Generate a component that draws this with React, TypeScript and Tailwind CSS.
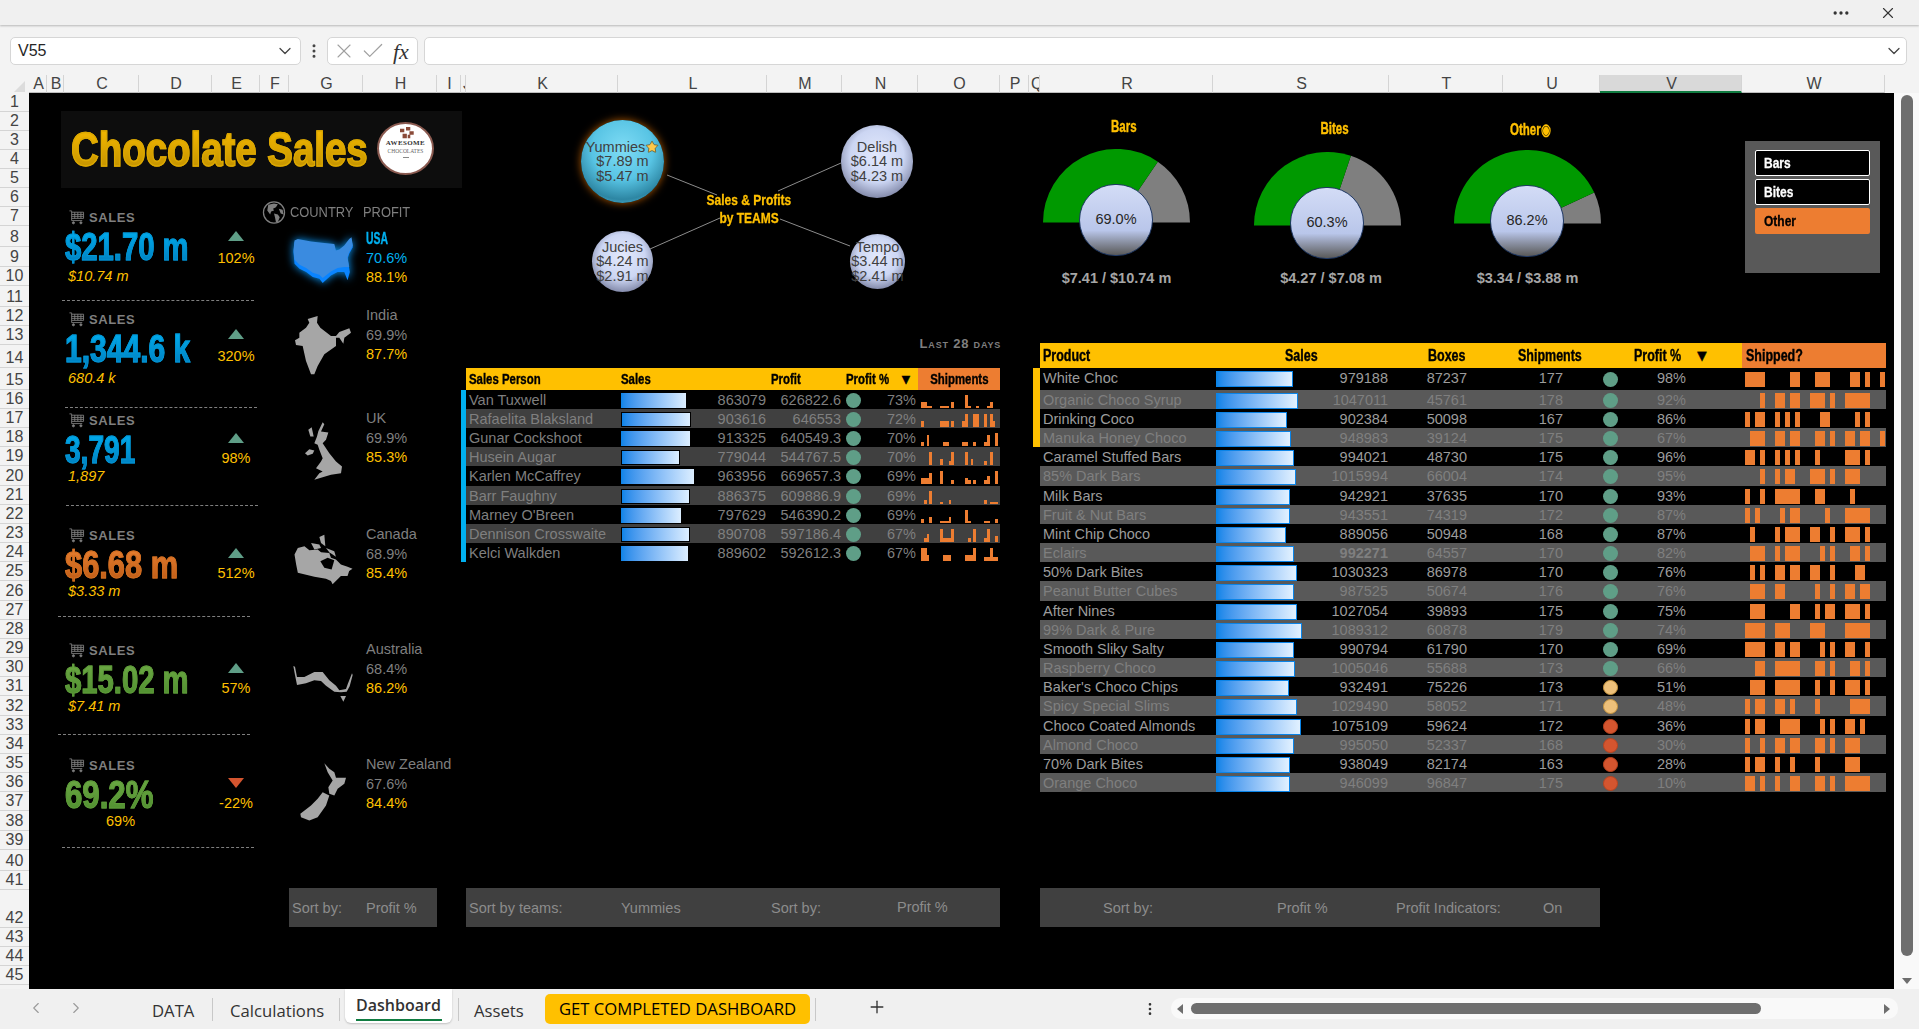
import type { ReactNode } from 'react'
import { clsx } from 'clsx'
import { Check, ChevronDown, ChevronLeft, ChevronRight, Ellipsis, EllipsisVertical, Plus, Star, X } from 'lucide-react'

const columns: [string, number][] = [
  ['A', 18], ['B', 17], ['C', 75], ['D', 73], ['E', 48], ['F', 29], ['G', 74], ['H', 74], ['I', 24], ['J', 5],
  ['K', 152], ['L', 149], ['M', 75], ['N', 76], ['O', 82], ['P', 29], ['Q', 11], ['R', 173], ['S', 176],
  ['T', 114], ['U', 97], ['V', 142], ['W', 143],
]

const rowHeights = [
  19, 19, 19, 19, 19, 19, 19, 21, 20, 19, 21, 19, 19, 23, 22, 19, 19, 19, 19, 20, 19, 19, 19, 19, 19, 20, 19,
  19, 19, 19, 19, 20, 19, 19, 19, 19, 19, 20, 19, 21, 19, 38, 19, 19, 19,
]

const BLUE = 'from-[#00b4f5] to-[#0078b8] [-webkit-text-stroke:1px_#0096d6]'
const ORANGE = 'from-[#ee8434] to-[#b8560f] [-webkit-text-stroke:1px_#d26f22]'
const GREEN = 'from-[#70ad47] to-[#4b8a2c] [-webkit-text-stroke:1px_#5e9b3a]'

const kpis = [
  { big: '$21.70 m', sub: '$10.74 m', pct: '102%', up: true, grad: BLUE, bigCls: 'scale-x-[0.75]', subCls: '-mt-[2px] pl-[39px]', h: 'h-[102px]', body: 'h-[90px]', rule: 'ml-[33px]', trend: 'pt-[21px]', gap: 'mt-[8px]' },
  { big: '1,344.6 k', sub: '680.4 k', pct: '320%', up: true, grad: BLUE, bigCls: 'scale-x-[0.77]', subCls: '-mt-[2px] pl-[39px]', h: 'h-[101px]', body: 'h-[95px]', rule: 'ml-[36px]', trend: 'pt-[17px]', gap: 'mt-[8px]' },
  { big: '3,791', sub: '1,897', pct: '98%', up: true, grad: BLUE, bigCls: 'scale-x-[0.72]', subCls: '-mt-[5px] pl-[39px]', h: 'h-[115px]', body: 'h-[92px]', rule: 'ml-[37px]', trend: 'pt-[20px]', gap: 'mt-[6px]' },
  { big: '$6.68 m', sub: '$3.33 m', pct: '512%', up: true, grad: ORANGE, bigCls: 'scale-x-[0.79]', subCls: '-mt-[5px] pl-[39px]', h: 'h-[115px]', body: 'h-[88px]', rule: 'ml-[29px]', trend: 'pt-[20px]', gap: 'mt-[6px]' },
  { big: '$15.02 m', sub: '$7.41 m', pct: '57%', up: true, grad: GREEN, bigCls: 'scale-x-[0.75]', subCls: '-mt-[5px] pl-[39px]', h: 'h-[115px]', body: 'h-[91px]', rule: 'ml-[29px]', trend: 'pt-[20px]', gap: 'mt-[6px]' },
  { big: '69.2%', sub: '69%', pct: '-22%', up: false, grad: GREEN, bigCls: 'scale-x-[0.8]', subCls: '-mt-[5px] pl-[77px]', h: 'h-[115px]', body: 'h-[89px]', rule: 'ml-[33px]', trend: 'pt-[20px]', gap: 'mt-[6px]' },
]

const countries = [
  { name: 'USA', a: '70.6%', b: '88.1%', h: 'h-[79px]', pad: 'pt-[2px]', map: 'usa', mapTop: '' },
  { name: 'India', a: '69.9%', b: '87.7%', h: 'h-[103px]', pad: '', map: 'india', mapTop: 'mt-[8px]' },
  { name: 'UK', a: '69.9%', b: '85.3%', h: 'h-[116px]', pad: '', map: 'uk', mapTop: 'mt-[12px]' },
  { name: 'Canada', a: '68.9%', b: '85.4%', h: 'h-[115px]', pad: '', map: 'canada', mapTop: 'mt-[8px]' },
  { name: 'Australia', a: '68.4%', b: '86.2%', h: 'h-[115px]', pad: '', map: 'australia', mapTop: 'mt-[25px]' },
  { name: 'New Zealand', a: '67.6%', b: '84.4%', h: 'h-[100px]', pad: '', map: 'nz', mapTop: 'mt-[7px]' },
]

const salesPeople = [
  { name: 'Van Tuxwell', bar: 65, sales: '863079', profit: '626822.6', pct: '73%', spark: '3311000111030000610010001300' },
  { name: 'Rafaelita Blaksland', bar: 70, sales: '903616', profit: '646553', pct: '72%', spark: '3000000333030003600660060630' },
  { name: 'Gunar Cockshoot', bar: 69, sales: '913325', profit: '640549.3', pct: '70%', spark: '2050000022000002200200025006' },
  { name: 'Husein Augar', bar: 59, sales: '779044', profit: '544767.5', pct: '70%', spark: '0006000300260000603000020600' },
  { name: 'Karlen McCaffrey', bar: 73, sales: '963956', profit: '669657.3', pct: '69%', spark: '3335000600020000320200024006' },
  { name: 'Barr Faughny', bar: 69, sales: '886375', profit: '609886.9', pct: '69%', spark: '0206000100200000000000020111' },
  { name: "Marney O'Breen", bar: 60, sales: '797629', profit: '546390.2', pct: '69%', spark: '2003000111300000610000011002' },
  { name: 'Dennison Crosswaite', bar: 69, sales: '890708', profit: '597186.4', pct: '67%', spark: '0240000622260000020600026003' },
  { name: 'Kelci Walkden', bar: 67, sales: '889602', profit: '592612.3', pct: '67%', spark: '6630000033300000333600022622' },
]

const GOOD = 'bg-[#5f9e87]'
const MID = 'bg-[#edc07a] border border-[#c8953f]'
const BAD = 'bg-[#d4552f] border border-[#b8431f]'

const products: { name: string; bar: number; sales: string; boxes: string; ship: string; dot: string; pct: string; spans: number[][]; bold?: boolean }[] = [
  { name: 'White Choc', bar: 77, sales: '979188', boxes: '87237', ship: '177', dot: GOOD, pct: '98%', spans: [[0, 4], [9, 2], [14, 3], [21, 2], [24, 1], [27, 1]] },
  { name: 'Organic Choco Syrup', bar: 82, sales: '1047011', boxes: '45761', ship: '178', dot: GOOD, pct: '92%', spans: [[3, 1], [6, 2], [9, 2], [13, 3], [17, 1], [20, 5]] },
  { name: 'Drinking Coco', bar: 71, sales: '902384', boxes: '50098', ship: '167', dot: GOOD, pct: '86%', spans: [[0, 1], [2, 2], [6, 1], [8, 1], [10, 1], [15, 2], [22, 1], [24, 1]] },
  { name: 'Manuka Honey Choco', bar: 75, sales: '948983', boxes: '39124', ship: '175', dot: GOOD, pct: '67%', spans: [[1, 3], [6, 2], [9, 2], [14, 2], [17, 1], [20, 2], [23, 2], [27, 1]] },
  { name: 'Caramel Stuffed Bars', bar: 78, sales: '994021', boxes: '48730', ship: '175', dot: GOOD, pct: '96%', spans: [[0, 2], [3, 1], [6, 1], [8, 1], [10, 1], [14, 1], [20, 3], [24, 1]] },
  { name: '85% Dark Bars', bar: 80, sales: '1015994', boxes: '66004', ship: '174', dot: GOOD, pct: '95%', spans: [[3, 1], [6, 1], [8, 2], [13, 3], [17, 1], [20, 3]] },
  { name: 'Milk Bars', bar: 74, sales: '942921', boxes: '37635', ship: '170', dot: GOOD, pct: '93%', spans: [[0, 1], [3, 1], [6, 5], [14, 2], [21, 1]] },
  { name: 'Fruit & Nut Bars', bar: 74, sales: '943551', boxes: '74319', ship: '172', dot: GOOD, pct: '87%', spans: [[0, 1], [2, 1], [7, 1], [9, 2], [16, 1], [20, 5]] },
  { name: 'Mint Chip Choco', bar: 70, sales: '889056', boxes: '50948', ship: '168', dot: GOOD, pct: '87%', spans: [[1, 1], [6, 1], [8, 3], [13, 2], [17, 1], [20, 3], [24, 1]] },
  { name: 'Eclairs', bar: 78, sales: '992271', boxes: '64557', ship: '170', dot: GOOD, pct: '82%', bold: true, spans: [[1, 3], [6, 1], [8, 3], [15, 1], [17, 1], [21, 2], [24, 1]] },
  { name: '50% Dark Bites', bar: 81, sales: '1030323', boxes: '86978', ship: '170', dot: GOOD, pct: '76%', spans: [[1, 1], [3, 1], [6, 2], [9, 2], [13, 2], [17, 1], [22, 2]] },
  { name: 'Peanut Butter Cubes', bar: 78, sales: '987525', boxes: '50674', ship: '176', dot: GOOD, pct: '76%', spans: [[1, 3], [6, 2], [14, 1], [17, 1], [20, 2], [23, 2]] },
  { name: 'After Nines', bar: 81, sales: '1027054', boxes: '39893', ship: '175', dot: GOOD, pct: '75%', spans: [[1, 3], [9, 2], [14, 1], [16, 2], [20, 3], [24, 1]] },
  { name: '99% Dark & Pure', bar: 86, sales: '1089312', boxes: '60878', ship: '179', dot: GOOD, pct: '74%', spans: [[0, 4], [6, 3], [13, 3], [20, 5]] },
  { name: 'Smooth Sliky Salty', bar: 78, sales: '990794', boxes: '61790', ship: '170', dot: GOOD, pct: '69%', spans: [[0, 4], [6, 2], [9, 2], [15, 1], [17, 1], [20, 2], [24, 1]] },
  { name: 'Raspberry Choco', bar: 79, sales: '1005046', boxes: '55688', ship: '173', dot: GOOD, pct: '66%', spans: [[2, 2], [6, 5], [14, 2], [17, 1], [21, 2], [24, 1]] },
  { name: "Baker's Choco Chips", bar: 73, sales: '932491', boxes: '75226', ship: '173', dot: MID, pct: '51%', spans: [[1, 3], [6, 5], [14, 1], [17, 1], [20, 3], [24, 1]] },
  { name: 'Spicy Special Slims', bar: 81, sales: '1029490', boxes: '58052', ship: '171', dot: MID, pct: '48%', spans: [[0, 1], [2, 2], [6, 2], [9, 1], [14, 1], [21, 4]] },
  { name: 'Choco Coated Almonds', bar: 85, sales: '1075109', boxes: '59624', ship: '172', dot: BAD, pct: '36%', spans: [[0, 1], [2, 2], [7, 4], [15, 1], [17, 1], [20, 2], [23, 1]] },
  { name: 'Almond Choco', bar: 78, sales: '995050', boxes: '52337', ship: '168', dot: BAD, pct: '30%', spans: [[0, 1], [3, 1], [6, 2], [9, 2], [14, 2], [17, 1], [20, 3]] },
  { name: '70% Dark Bites', bar: 74, sales: '938049', boxes: '82174', ship: '163', dot: BAD, pct: '28%', spans: [[0, 1], [2, 2], [6, 1], [9, 1], [14, 1], [20, 3]] },
  { name: 'Orange Choco', bar: 74, sales: '946099', boxes: '96847', ship: '175', dot: BAD, pct: '10%', spans: [[0, 2], [3, 1], [6, 1], [9, 2], [14, 2], [17, 1], [20, 5]] },
]

const gauges = [
  { title: 'Bars', mark: '', value: 0.69, label: '69.0%', money: '$7.41 / $10.74 m', wrap: 'mt-[24px] ml-[3px]', gap: 'mt-[12px]', moneyCls: 'mt-[46px]', titleCls: 'pl-[14px]' },
  { title: 'Bites', mark: '', value: 0.603, label: '60.3%', money: '$4.27 / $7.08 m', wrap: 'mt-[26px] ml-[64px]', gap: 'mt-[13px]', moneyCls: 'mt-[43px] pl-[7px]', titleCls: 'pl-[14px]' },
  { title: 'Other', mark: '◉', value: 0.862, label: '86.2%', money: '$3.34 / $3.88 m', wrap: 'mt-[27px] ml-[53px]', gap: 'mt-[10px]', moneyCls: 'mt-[45px]', titleCls: 'pl-[6px]' },
]

// pulled out of the sheet by eye, points are in the zoomed map's own units
function CountryMap({ map }: { map: string }) {
  if (map === 'usa') {
    return (
      <svg viewBox="0 0 255 175" className="w-[85px] h-[58px] drop-shadow-[0_0_4px_#0a9cff]">
        <polygon fill="#0a84ff" points="40,40 50,35 90,43 130,47 160,50 165,70 175,67 190,55 205,35 212,30 216,55 205,75 200,90 207,130 200,155 190,130 170,130 150,140 125,163 115,150 95,145 75,130 55,120 40,105 37,70" />
        <polygon fill="#3a8be0" points="40,35 50,30 90,38 130,42 160,45 165,65 175,62 190,50 205,30 212,25 216,50 205,70 200,85 205,115 190,115 170,118 150,128 125,148 115,138 95,132 75,118 55,108 40,92 37,65" />
      </svg>
    )
  }
  if (map === 'india') {
    return (
      <svg viewBox="0 0 255 195" className="w-[85px] h-[65px]">
        <polygon fill="#a6a6a6" points="80,15 110,6 108,26 118,41 150,66 165,66 175,54 205,43 210,56 190,71 187,89 175,71 165,71 165,96 130,121 110,156 100,181 90,181 75,141 65,96 45,93 42,79 55,71 55,56 75,41 85,26" />
      </svg>
    )
  }
  if (map === 'uk') {
    return (
      <svg viewBox="0 0 255 185" className="w-[85px] h-[62px]">
        <g fill="#a6a6a6">
          <polygon points="125,3 130,9 120,31 142,34 135,56 125,66 145,96 165,121 183,136 180,156 150,161 100,176 115,156 125,151 105,141 120,121 125,111 115,86 110,71 100,66 108,46 112,30" />
          <polygon points="72,96 85,84 100,88 95,98 80,103" />
          <polygon points="82,26 92,18 98,46 88,46" />
        </g>
      </svg>
    )
  }
  if (map === 'canada') {
    return (
      <svg viewBox="0 0 255 175" className="w-[85px] h-[58px]">
        <g fill="#a6a6a6">
          <polygon points="50,45 70,40 85,52 110,50 120,58 145,60 150,75 165,80 180,95 200,102 215,108 205,115 200,130 180,130 155,155 150,145 135,138 100,132 50,120 45,95 40,65" />
          <polygon points="90,30 115,35 120,45 100,50" />
          <polygon points="115,12 130,5 133,40 120,30" />
          <polygon points="135,45 160,55 165,72 145,58" />
        </g>
        <polygon fill="#000" points="118,85 140,75 160,82 152,110 130,105" />
      </svg>
    )
  }
  if (map === 'australia') {
    return (
      <svg viewBox="0 0 255 120" className="w-[85px] h-[40px]">
        <g fill="#a6a6a6">
          <polygon points="37,3 42,5 48,36 70,36 100,21 125,21 145,46 165,62 175,76 195,72 200,58 213,25 215,30 206,64 197,80 180,82 160,80 135,62 120,48 100,46 75,55 48,60 42,30" />
          <polygon points="178,93 195,93 187,110" />
        </g>
      </svg>
    )
  }
  return (
    <svg viewBox="0 0 255 185" className="w-[85px] h-[62px]">
      <g fill="#a6a6a6">
        <polygon points="130,3 145,20 160,30 165,47 195,47 190,65 170,80 160,100 145,95 142,75 155,55 140,30" />
        <polygon points="125,90 145,100 135,130 110,165 85,175 60,165 58,155 90,130 110,110" />
      </g>
    </svg>
  )
}

function Cart() {
  return (
    <svg viewBox="0 0 18 17" className="w-[17px] h-[15px] flex-none" fill="none" stroke="#7f7f7f" strokeWidth="1">
      <path d="M1 1h2.5v11h12M3.5 2.5H17v7H3.5M3.5 5h13.5M3.5 7.2h13.5M7 2.5v7M10.5 2.5v7M14 2.5v7" />
      <circle cx="5.5" cy="14.5" r="1.2" fill="#7f7f7f" />
      <circle cx="14" cy="14.5" r="1.2" fill="#7f7f7f" />
    </svg>
  )
}

function Globe() {
  return (
    <svg viewBox="0 0 24 24" className="w-[24px] h-[23px] flex-none">
      <circle cx="12" cy="12" r="11" fill="none" stroke="#7f7f7f" strokeWidth="1.3" />
      <path fill="#7f7f7f" d="M6 4l6-1.5 4 1-2 3-3 1.5 1 2-3 1-1 3-3-4zM12 13l4 1 2 3-2 5-2 0-1-5zM17 8l4 1 1 5-3-1z" />
    </svg>
  )
}

function Kpi({ kpi }: { kpi: (typeof kpis)[number] }) {
  return (
    <div className={kpi.h}>
      <div className={clsx('flex', kpi.body)}>
        <div className="w-[181px] flex-none">
          <div className="flex items-center gap-[4px] pl-[39px] h-[15px]">
            <Cart />
            <span className="text-[13px] font-bold tracking-[0.6px] text-[#7f7f7f]">SALES</span>
          </div>
          <div className="pl-[36px] h-[44px] flex items-center">
            <span
              className={clsx(
                'inline-block origin-left whitespace-nowrap text-[39px] leading-[1.15] font-bold bg-linear-to-b bg-clip-text text-transparent',
                kpi.grad,
                kpi.bigCls,
              )}
            >
              {kpi.big}
            </span>
          </div>
          <div className={clsx('h-[20px] flex items-center text-[14.5px] text-[#ffc000]', kpi.subCls, kpi.big !== '69.2%' && 'italic')}>{kpi.sub}</div>
        </div>
        <div className={clsx('w-[52px] flex-none flex flex-col items-center', kpi.trend)}>
          {kpi.up ? (
            <div className="w-0 h-0 border-l-[8px] border-r-[8px] border-b-[10px] border-l-transparent border-r-transparent border-b-[#5f9e87]" />
          ) : (
            <div className="w-0 h-0 border-l-[8px] border-r-[8px] border-t-[10px] border-l-transparent border-r-transparent border-t-[#d4552f]" />
          )}
          <span className={clsx('text-[14.5px] leading-[18px] text-[#ffc000]', kpi.gap)}>{kpi.pct}</span>
        </div>
      </div>
      <div className={clsx('w-[192px] border-t border-dashed border-[#7f7f7f]', kpi.rule)} />
    </div>
  )
}

function CountryRow({ c }: { c: (typeof countries)[number] }) {
  const isUsa = c.name === 'USA'
  return (
    <div className={clsx('flex flex-none', c.h, c.pad)}>
      <div className="w-[104px] flex-none flex justify-end">
        <div className={clsx('w-[85px]', c.mapTop)}>
          <CountryMap map={c.map} />
        </div>
      </div>
      <div className="text-[14.5px] leading-[19.5px] whitespace-nowrap">
        {isUsa ? (
          <div className="text-[#00b0f0] font-bold text-[16px] origin-left scale-x-[0.65] [-webkit-text-stroke:0.4px_#00b0f0]">{c.name}</div>
        ) : (
          <div className="text-[#7f7f7f]">{c.name}</div>
        )}
        <div className={isUsa ? 'text-[#00b0f0]' : 'text-[#7f7f7f]'}>{c.a}</div>
        <div className="text-[#ffc000]">{c.b}</div>
      </div>
    </div>
  )
}

function LeftColumn() {
  return (
    <div className="w-[432px] flex-none flex flex-col">
      <div className="mt-[18px] ml-[32px] w-[401px] h-[77px] flex-none bg-[#0d0d0d] flex items-center relative">
        <span className="ml-[10px] inline-block origin-left scale-x-[0.8] whitespace-nowrap text-[48px] leading-[1.2] font-bold bg-linear-to-b from-[#ffc000] to-[#b88a00] bg-clip-text text-transparent [-webkit-text-stroke:1.5px_#dca800]">
          Chocolate Sales
        </span>
        <div className="absolute left-[316px] top-[11px] w-[57px] h-[53px] rounded-[50%] bg-white border-2 border-[#8a5a50] flex flex-col items-center [font-family:'Liberation_Serif',serif]">
          <svg viewBox="0 0 20 14" className="w-[18px] h-[12px] mt-[3px]">
            <path fill="#8a4a38" d="M3 2h5v4H3zM10 0h5v4h-5zM14 5h5v4h-5zM6 8h5v5H6zM12 9h3v4h-3z" />
          </svg>
          <span className="text-[7px] leading-[9px] font-bold text-[#333] tracking-[0.4px]">AWESOME</span>
          <span className="text-[5.5px] leading-[6px] text-[#666]">CHOCOLATES</span>
          <span className="mt-[3px] w-[6px] border-t border-[#888]" />
        </div>
      </div>
      <div className="flex flex-1">
        <div className="w-[233px] flex-none pt-[22px]">
          {kpis.map((k) => (
            <Kpi key={k.big} kpi={k} />
          ))}
        </div>
        <div className="w-[199px] flex-none flex flex-col pt-[13px]">
          <div className="flex items-center h-[23px] text-[14px] text-[#7f7f7f] mb-[3px]">
            <Globe />
            <span className="ml-[4px] w-[73px] inline-block origin-left scale-x-[0.92] whitespace-nowrap font-medium">COUNTRY</span>
            <span className="origin-left scale-x-[0.92] inline-block font-medium">PROFIT</span>
          </div>
          {countries.map((c) => (
            <CountryRow key={c.name} c={c} />
          ))}
          <div className="mt-auto mb-[62px] w-[148px] h-[39px] bg-[#404040] flex items-center pt-[2px] text-[14.5px] text-[#8c8c8c] ml-[27px]">
            <span className="ml-[3px] w-[74px]">Sort by:</span>
            <span>Profit %</span>
          </div>
        </div>
      </div>
    </div>
  )
}

function Ball({ cls, name, a, b, star }: { cls: string; name: string; a: string; b: string; star?: boolean }) {
  return (
    <div className={clsx('absolute rounded-full flex flex-col items-center justify-center text-[14.5px] leading-[14.5px] text-[#404040] whitespace-nowrap', cls)}>
      <div className="flex items-center">
        {name}
        {star && <Star className="w-[14px] h-[14px] fill-[#ffc84a] text-[#5a4a20]" strokeWidth={1.2} />}
      </div>
      <div>{a}</div>
      <div>{b}</div>
    </div>
  )
}

function Network() {
  const silver = 'bg-[radial-gradient(circle_at_50%_42%,#e3e9fc_0%,#ccd6f3_48%,#7f86a6_78%,#ced8f5_96%)]'
  return (
    <div className="relative h-[275px] flex-none flex flex-col justify-end items-end">
      <svg className="absolute inset-0 w-full h-full" fill="none" stroke="#8c8c8c" strokeWidth="1">
        <line x1="206" y1="82" x2="256" y2="102" />
        <line x1="317" y1="98" x2="380" y2="70" />
        <line x1="189" y1="156" x2="259" y2="125" />
        <line x1="319" y1="126" x2="389" y2="153" />
      </svg>
      <Ball cls="left-[120px] top-[27px] w-[83px] h-[83px] shadow-[0_0_8px_#b35a00] bg-[radial-gradient(circle_at_50%_35%,#7fdcf5_0%,#58c4e4_45%,#2d86a3_74%,#62cbea_94%)]" name="Yummies" a="$7.89 m" b="$5.47 m" star />
      <Ball cls={clsx('left-[380px] top-[32px] w-[72px] h-[73px]', silver)} name="Delish" a="$6.14 m" b="$4.23 m" />
      <Ball cls={clsx('left-[131px] top-[138px] w-[61px] h-[61px]', silver)} name="Jucies" a="$4.24 m" b="$2.91 m" />
      <Ball cls={clsx('left-[389px] top-[141px] w-[55px] h-[55px]', silver)} name="Tempo" a="$3.44 m" b="$2.41 m" />
      <div className="absolute left-[228px] top-[98px] w-[120px] flex flex-col items-center text-[15px] leading-[18px] font-bold text-[#ffc000] whitespace-nowrap [-webkit-text-stroke:0.3px_#ffc000]">
        <span className="scale-x-[0.8] inline-block">Sales &amp; Profits</span>
        <span className="scale-x-[0.8] inline-block">by TEAMS</span>
      </div>
      <span className="mb-[17px] mr-[39px] text-[13px] leading-[14px] font-bold text-[#7f7f7f] tracking-[0.8px] [font-variant:small-caps]">Last 28 days</span>
    </div>
  )
}

function Spark({ data }: { data: string }) {
  return (
    <div className="h-[15px] pl-[5px] pr-[2px] grid grid-cols-[repeat(28,1fr)] items-end">
      {data.split('').map((d, i) => (
        <div key={i} className="bg-[#ed7d31]" style={{ height: Number(d) * 2.2 }} />
      ))}
    </div>
  )
}

function SalesTable() {
  return (
    <div className="flex">
      <div className="w-[5px] flex-none mt-[22px] h-[172px] bg-[#00b0f0]" />
      <div className="w-[534px] flex-none">
        <div className="flex h-[22px] bg-[#ffc000] text-black text-[15px] font-bold items-center whitespace-nowrap [-webkit-text-stroke:0.4px_black]">
          <div className="w-[155px] pl-[3px]"><span className="inline-block origin-left scale-x-[0.76]">Sales Person</span></div>
          <div className="w-[150px]"><span className="inline-block origin-left scale-x-[0.76]">Sales</span></div>
          <div className="w-[75px]"><span className="inline-block origin-left scale-x-[0.76]">Profit</span></div>
          <div className="w-[72px] flex items-center"><span className="inline-block w-[53px] origin-left scale-x-[0.76]">Profit %</span><span className="text-[14px]">▼</span></div>
          <div className="w-[82px] h-full bg-[#ed7d31] flex items-center justify-center"><span className="inline-block scale-x-[0.76]">Shipments</span></div>
        </div>
        {salesPeople.map((p, i) => (
          <div
            key={p.name}
            className={clsx(
              'grid grid-cols-[155px_145px_75px_24px_51px_84px] items-center text-[14.5px] text-[#7f7f7f] whitespace-nowrap',
              i === 4 ? 'h-[20px]' : 'h-[19px]',
              i % 2 === 1 ? 'bg-[#404040]' : 'bg-black',
            )}
          >
            <div className="pl-[3px]">{p.name}</div>
            <div className="flex items-center justify-between">
              <div
                className={clsx('h-[15px] bg-linear-to-r from-[#0a84e8] to-[#dceeff]', i % 2 === 1 && 'border border-black')}
                style={{ width: p.bar }}
              />
              <span>{p.sales}</span>
            </div>
            <div className="text-right">{p.profit}</div>
            <div className="flex justify-center"><div className={clsx('w-[15px] h-[15px] rounded-full', GOOD)} /></div>
            <div className="text-right">{p.pct}</div>
            <Spark data={p.spark} />
          </div>
        ))}
      </div>
    </div>
  )
}

function Gauge({ g }: { g: (typeof gauges)[number] }) {
  const r = 73.5
  const a = g.value * Math.PI
  const x = r - r * Math.cos(a)
  const y = r - r * Math.sin(a)
  return (
    <div className={clsx('w-[147px] flex-none flex flex-col', g.wrap)}>
      <div className={clsx('h-[20px] flex items-center justify-center text-[16px] font-bold text-[#ffc000]', g.titleCls)}>
        <span className="inline-block scale-x-[0.72] whitespace-nowrap">
          <span className="[-webkit-text-stroke:0.4px_#ffc000]">{g.title}</span>
          {g.mark}
        </span>
      </div>
      <div className={clsx('relative h-[74px]', g.gap)}>
        <svg viewBox="0 0 147 74" className="w-[147px] h-[74px]">
          <path fill="#7f7f7f" d={`M73.5 73.5L${x} ${y}A${r} ${r} 0 0 1 147 73.5Z`} />
          <path fill="#009900" d={`M0 73.5A${r} ${r} 0 0 1 ${x} ${y}L73.5 73.5Z`} />
        </svg>
        <div className="absolute left-[36px] top-[35px] w-[74px] h-[72px] rounded-full border border-[#1f3864] bg-linear-to-b from-[#d3dcf6] via-[#b9c6ea] via-65% to-[#5a5a5a] flex items-center justify-center text-[14.5px] text-[#262626]">
          {g.label}
        </div>
      </div>
      <div className={clsx('h-[20px] flex items-center justify-center text-[14.5px] font-bold text-[#a6a6a6] whitespace-nowrap', g.moneyCls)}>
        <span className="inline-block">{g.money}</span>
      </div>
    </div>
  )
}

function ProductTable() {
  return (
    <div className="flex -ml-[7px]">
      <div className="w-[7px] flex-none mt-[25px] h-[79px] bg-[#ffc000]" />
      <div className="w-[846px] flex-none">
        <div className="flex h-[25px] bg-[#ffc000] text-black text-[16px] font-bold items-center whitespace-nowrap [-webkit-text-stroke:0.4px_black]">
          <div className="w-[245px] pl-[3px]"><span className="inline-block origin-left scale-x-[0.78]">Product</span></div>
          <div className="w-[143px]"><span className="inline-block origin-left scale-x-[0.78]">Sales</span></div>
          <div className="w-[90px]"><span className="inline-block origin-left scale-x-[0.78]">Boxes</span></div>
          <div className="w-[116px]"><span className="inline-block origin-left scale-x-[0.78]">Shipments</span></div>
          <div className="w-[108px] flex items-center"><span className="inline-block w-[60px] origin-left scale-x-[0.78]">Profit %</span><span className="text-[16px]">▼</span></div>
          <div className="w-[144px] h-full bg-[#ed7d31] pl-[4px] flex items-center"><span className="inline-block origin-left scale-x-[0.78]">Shipped?</span></div>
        </div>
        {products.map((p, i) => (
          <div
            key={p.name}
            className={clsx(
              'grid grid-cols-[173px_175px_79px_96px_94px_29px_56px_144px] items-center text-[14.5px] whitespace-nowrap',
              i === 0 ? 'h-[22px]' : i === 5 || i === 11 || i === 17 ? 'h-[20px]' : 'h-[19px]',
              i % 2 === 1 ? 'bg-[#595959] text-[#7f7f7f]' : 'bg-black text-[#9c9c9c]',
            )}
          >
            <div className="pl-[3px]">{p.name}</div>
            <div className="flex items-center justify-between pl-[3px]">
              <div className="h-[16px] border border-[#0a84e8] bg-linear-to-r from-[#0a84e8] to-[#e2f1ff]" style={{ width: p.bar }} />
              <span className={clsx(p.bold && 'font-bold')}>{p.sales}</span>
            </div>
            <div className="text-right">{p.boxes}</div>
            <div className="text-right">{p.ship}</div>
            <div className="flex justify-center"><div className={clsx('w-[15px] h-[15px] rounded-full', p.dot)} /></div>
            <div className="text-right flex justify-end">{p.pct}</div>
            <div />
            <div className="pl-[3px] pr-[1px] grid grid-cols-[repeat(28,1fr)] h-[15px]">
              {p.spans.map(([start, len]) => (
                <div key={start} className="bg-[#ed7d31]" style={{ gridColumn: `${start + 1} / span ${len}` }} />
              ))}
            </div>
          </div>
        ))}
      </div>
    </div>
  )
}

function Slicer() {
  return (
    <div className="mt-[48px] ml-[144px] w-[135px] h-[132px] flex-none bg-[#595959] pt-[9px] pl-[10px] flex flex-col gap-[3px]">
      {['Bars', 'Bites'].map((s) => (
        <div key={s} className="w-[115px] h-[26px] rounded-[2px] bg-black border border-white text-white text-[15px] font-bold flex items-center pl-[8px] [-webkit-text-stroke:0.3px_white]">
          <span className="inline-block origin-left scale-x-[0.8]">{s}</span>
        </div>
      ))}
      <div className="w-[115px] h-[26px] rounded-[2px] bg-[#ed7d31] text-black text-[15px] font-bold flex items-center pl-[9px] [-webkit-text-stroke:0.3px_black]">
        <span className="inline-block origin-left scale-x-[0.8]">Other</span>
      </div>
    </div>
  )
}

function Sheet() {
  return (
    <div className="w-[1865px] flex-none h-full bg-black flex [font-family:'Liberation_Sans',Arial,sans-serif]">
      <LeftColumn />
      <div className="w-[579px] flex-none flex flex-col">
        <Network />
        <SalesTable />
        <div className="mt-auto mb-[62px] ml-[5px] w-[534px] h-[39px] bg-[#404040] flex items-center pt-[2px] text-[14.5px] text-[#8c8c8c]">
          <span className="ml-[3px] w-[152px]">Sort by teams:</span>
          <span className="w-[150px]">Yummies</span>
          <span className="w-[126px]">Sort by:</span>
          <span className="-mt-[2px]">Profit %</span>
        </div>
      </div>
      <div className="w-[846px] flex-none flex flex-col">
        <div className="flex h-[250px] flex-none">
          {gauges.map((g) => (
            <Gauge key={g.title} g={g} />
          ))}
          <Slicer />
        </div>
        <ProductTable />
        <div className="mt-auto mb-[62px] w-[560px] h-[39px] bg-[#404040] flex items-center pt-[2px] text-[14.5px] text-[#8c8c8c]">
          <span className="ml-[63px] w-[174px]">Sort by:</span>
          <span className="w-[119px]">Profit %</span>
          <span className="w-[147px]">Profit Indicators:</span>
          <span>On</span>
        </div>
      </div>
    </div>
  )
}

function FormulaBar() {
  return (
    <div className="h-[50px] flex-none pt-[12px] pl-[10px] flex items-start bg-[#f3f3f3] text-[#262626]">
      <div className="w-[291px] h-[28px] bg-white border border-[#d6d6d6] rounded-[5px] flex items-center pl-[7px] pr-[5px] justify-between text-[16px] [font-family:'Liberation_Sans',Arial,sans-serif]">
        <span>V55</span>
        <ChevronDown className="w-[20px] h-[20px] text-[#444]" strokeWidth={1.5} />
      </div>
      <EllipsisVertical className="w-[18px] h-[18px] mt-[5px] ml-[4px] text-[#444]" strokeWidth={2} />
      <div className="ml-[4px] w-[91px] h-[28px] bg-white border border-[#d6d6d6] rounded-[5px] flex items-center pl-[4px] text-[#a0a0a0]">
        <X className="w-[24px] h-[24px]" strokeWidth={1.1} />
        <Check className="w-[26px] h-[26px] ml-[4px]" strokeWidth={1.1} />
        <span className="ml-[7px] text-[22px] italic text-[#333] [font-family:'Liberation_Serif',serif]">fx</span>
      </div>
      <div className="ml-[6px] w-[1483px] h-[28px] bg-white border border-[#d6d6d6] rounded-[5px] flex items-center justify-end pr-[2px]">
        <ChevronDown className="w-[20px] h-[20px] text-[#444]" strokeWidth={1.5} />
      </div>
    </div>
  )
}

function ColumnHeaders() {
  return (
    <div className="h-[18px] flex-none flex bg-[#f3f3f3] text-[16px] leading-[18px] text-[#444] [font-family:'Liberation_Sans',Arial,sans-serif]">
      <div className="w-[29px] flex-none flex items-end justify-end pr-[4px] pb-[1px]">
        <svg viewBox="0 0 11 11" className="w-[11px] h-[11px]"><polygon points="11,0 11,11 0,11" fill="#dcdcdc" /></svg>
      </div>
      {columns.map(([name, w]) => (
        <div
          key={name}
          className={clsx('flex-none overflow-hidden text-center pl-[2px] border-r border-[#d4d4d4]', name === 'V' ? 'bg-[#d9d9d9] border-b-2 border-b-[#107c41]' : 'border-b border-b-[#bdbdbd]')}
          style={{ width: w }}
        >
          {name}
        </div>
      ))}
    </div>
  )
}

function RowHeaders() {
  return (
    <div className="w-[29px] flex-none h-full overflow-hidden text-[16px] text-[#444] bg-[#f3f3f3] [font-family:'Liberation_Sans',Arial,sans-serif]">
      {rowHeights.map((h, i) => (
        <div key={i} className="border-b border-[#d4d4d4] text-center flex items-end justify-center leading-[18px]" style={{ height: h }}>
          {i + 1}
        </div>
      ))}
    </div>
  )
}

function Sep() {
  return <div className="w-px h-[23px] flex-none bg-[#c8c8c8]" />
}

function Tabs() {
  return (
    <div className="h-[40px] flex-none flex items-start bg-[#f0f0f0] text-[16.7px] text-[#333] [font-family:'Open_Sans',sans-serif] relative">
      <div className="w-[152px] flex-none flex pl-[27px] gap-[22px] pt-[10px] text-[#9a9a9a]">
        <ChevronLeft className="w-[18px] h-[18px]" strokeWidth={1.5} />
        <ChevronRight className="w-[18px] h-[18px]" strokeWidth={1.5} />
      </div>
      <div className="w-[60px] flex-none pt-[9px]">DATA</div>
      <div className="pt-[9px]"><Sep /></div>
      <div className="w-[126px] flex-none pl-[17px] pt-[9px]">Calculations</div>
      <div className="pt-[9px]"><Sep /></div>
      <div className="ml-[5px] w-[107px] h-[34px] flex-none bg-white rounded-b-[6px] shadow-[0_1px_2px_#0003] pl-[11px] pt-[4px] font-semibold text-[16px] flex flex-col">
        <span>Dashboard</span>
        <span className="mt-[2px] w-[86px] h-[2px] bg-[#107c41]" />
      </div>
      <div className="ml-[6px] pt-[9px]"><Sep /></div>
      <div className="ml-[15px] w-[49px] flex-none pt-[9px]">Assets</div>
      <div className="ml-[22px] mt-[5px] w-[265px] h-[30px] flex-none rounded-[5px] bg-[#ffc000] text-black flex items-center justify-center">GET COMPLETED DASHBOARD</div>
      <div className="ml-[5px] pt-[9px]"><Sep /></div>
      <Plus className="ml-[51px] mt-[8px] w-[20px] h-[20px] text-[#333]" strokeWidth={1.6} />
      <EllipsisVertical className="ml-[255px] mt-[12px] w-[16px] h-[16px] text-[#333]" strokeWidth={2} />
      <div className="ml-[13px] mt-[9px] w-[727px] h-[21px] flex-none rounded-[10px] bg-[#f9f9f9] flex items-center">
        <div className="ml-[6px] w-0 h-0 border-y-[5px] border-r-[6px] border-y-transparent border-r-[#6e6e6e]" />
        <div className="ml-[8px] w-[570px] h-[11px] rounded-full bg-[#6e6e6e]" />
        <div className="ml-auto mr-[8px] w-0 h-0 border-y-[5px] border-l-[6px] border-y-transparent border-l-[#6e6e6e]" />
      </div>
    </div>
  )
}

function Scrollbar() {
  return (
    <div className="w-[25px] flex-none h-full bg-[#f9f9f9] flex flex-col items-center relative">
      <div className="mt-[2px] w-[12px] h-[861px] rounded-full bg-[#6e6e6e]" />
      <div className="mt-[22px] w-0 h-0 border-x-[5px] border-t-[6px] border-x-transparent border-t-[#6e6e6e]" />
    </div>
  )
}

function TopBar({ children }: { children: ReactNode }) {
  return <div className="h-[25px] flex-none bg-[#f0f0f0] shadow-[0_1px_2px_#00000040] relative z-10 flex items-center justify-end gap-[28px] pr-[22px] text-[#333]">{children}</div>
}

export default function App() {
  return (
    <div className="w-[1919px] h-[1029px] overflow-hidden flex flex-col bg-[#f0f0f0] [font-family:'Open_Sans',sans-serif]">
      <TopBar>
        <Ellipsis className="w-[20px] h-[20px]" strokeWidth={2} />
        <X className="w-[18px] h-[18px]" strokeWidth={1.5} />
      </TopBar>
      <FormulaBar />
      <ColumnHeaders />
      <div className="h-[896px] flex-none flex">
        <RowHeaders />
        <Sheet />
        <Scrollbar />
      </div>
      <Tabs />
    </div>
  )
}
